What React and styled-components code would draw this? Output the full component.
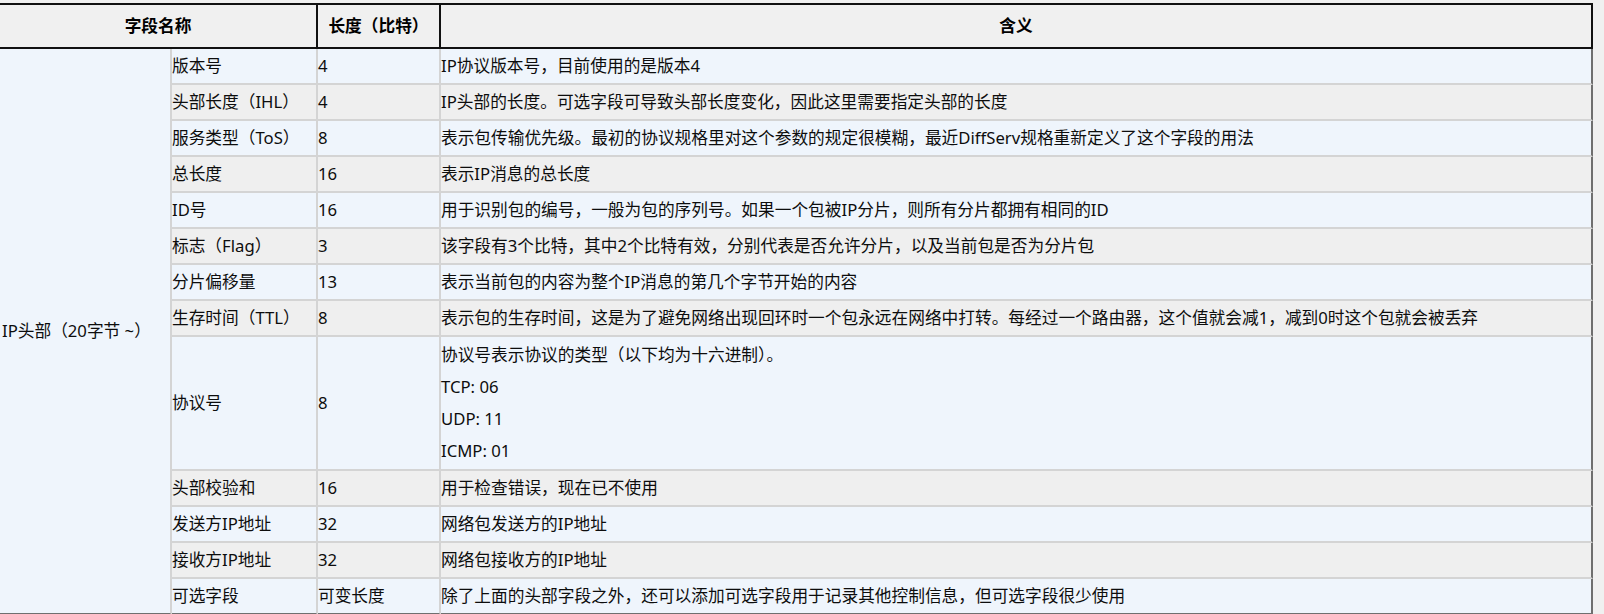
import React from 'react';
import styled, { createGlobalStyle } from 'styled-components';

const GlobalStyle = createGlobalStyle`
  html, body {
    margin: 0;
    padding: 0;
    background: #f0f0f0;
  }
`;

const Page = styled.div`
  padding-top: 3px;
  font-family: 'Noto Sans', 'Noto Sans CJK SC', sans-serif;
  color: #0d0d0d;
`;

const Table = styled.table`
  width: 1593px;
  table-layout: fixed;
  border-collapse: separate;
  border-spacing: 0;
  font-size: 16.7px;
  line-height: 24px;
`;

const HeadCell = styled.th`
  box-sizing: border-box;
  background: #f0f0f0;
  border-top: 2px solid #111;
  border-bottom: 2px solid #111;
  border-right: 2px solid #111;
  padding: 9px 0;
  font-weight: 700;
  color: #000;
  text-align: center;
`;

const Cell = styled.td`
  box-sizing: border-box;
  background: ${props => (props.shaded ? '#efefef' : '#eff5fc')};
  border-right: 2px solid ${props => (props.last ? '#6f6f6f' : '#d4d4d4')};
  border-bottom: 2px solid ${props => (props.bottom ? '#6f6f6f' : '#d4d4d4')};
  padding: 5px 0;
  vertical-align: middle;
  white-space: nowrap;
`;

const GroupCell = styled(Cell)`
  padding-left: 2px;
`;

const Stack = styled.div`
  display: flex;
  flex-direction: column;
  gap: 8px;
  padding: 1px 0;
`;

const rows = [
  ['版本号', '4', 'IP协议版本号，目前使用的是版本4'],
  ['头部长度（IHL）', '4', 'IP头部的长度。可选字段可导致头部长度变化，因此这里需要指定头部的长度'],
  ['服务类型（ToS）', '8', '表示包传输优先级。最初的协议规格里对这个参数的规定很模糊，最近DiffServ规格重新定义了这个字段的用法'],
  ['总长度', '16', '表示IP消息的总长度'],
  ['ID号', '16', '用于识别包的编号，一般为包的序列号。如果一个包被IP分片，则所有分片都拥有相同的ID'],
  ['标志（Flag）', '3', '该字段有3个比特，其中2个比特有效，分别代表是否允许分片，以及当前包是否为分片包'],
  ['分片偏移量', '13', '表示当前包的内容为整个IP消息的第几个字节开始的内容'],
  ['生存时间（TTL）', '8', '表示包的生存时间，这是为了避免网络出现回环时一个包永远在网络中打转。每经过一个路由器，这个值就会减1，减到0时这个包就会被丢弃'],
  ['协议号', '8', ['协议号表示协议的类型（以下均为十六进制）。', 'TCP: 06', 'UDP: 11', 'ICMP: 01']],
  ['头部校验和', '16', '用于检查错误，现在已不使用'],
  ['发送方IP地址', '32', '网络包发送方的IP地址'],
  ['接收方IP地址', '32', '网络包接收方的IP地址'],
  ['可选字段', '可变长度', '除了上面的头部字段之外，还可以添加可选字段用于记录其他控制信息，但可选字段很少使用'],
];

const App = () => (
  <Page>
    <GlobalStyle />
    <Table>
      <colgroup>
        <col style={{ width: 172 }} />
        <col style={{ width: 146 }} />
        <col style={{ width: 123 }} />
        <col />
      </colgroup>
      <thead>
        <tr>
          <HeadCell colSpan={2}>字段名称</HeadCell>
          <HeadCell>长度（比特）</HeadCell>
          <HeadCell>含义</HeadCell>
        </tr>
      </thead>
      <tbody>
        {rows.map(([name, bits, meaning], i) => {
          const shaded = i % 2 === 1;
          const bottom = i === rows.length - 1;
          return (
            <tr key={name}>
              {i === 0 && (
                <GroupCell rowSpan={rows.length} bottom>
                  IP头部（20字节 ~）
                </GroupCell>
              )}
              <Cell shaded={shaded} bottom={bottom}>{name}</Cell>
              <Cell shaded={shaded} bottom={bottom}>{bits}</Cell>
              <Cell shaded={shaded} bottom={bottom} last>
                {Array.isArray(meaning) ? (
                  <Stack>
                    {meaning.map(line => (
                      <div key={line}>{line}</div>
                    ))}
                  </Stack>
                ) : (
                  meaning
                )}
              </Cell>
            </tr>
          );
        })}
      </tbody>
    </Table>
  </Page>
);

export default App;
